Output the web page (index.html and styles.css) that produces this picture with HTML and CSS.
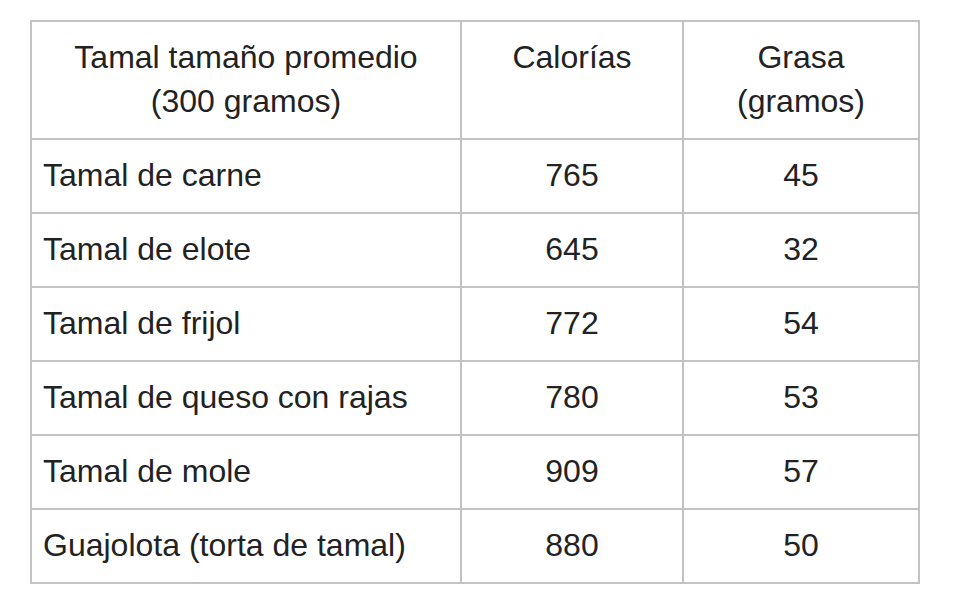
FILE: index.html
```html
<!DOCTYPE html>
<html lang="es">
<head>
<meta charset="utf-8">
<link rel="stylesheet" href="styles.css">
</head>
<body>
<table class="nutri">
  <colgroup>
    <col class="c1"><col class="c2"><col class="c3">
  </colgroup>
  <thead>
    <tr>
      <th>Tamal tamaño promedio<br>(300 gramos)</th>
      <th>Calorías</th>
      <th>Grasa<br>(gramos)</th>
    </tr>
  </thead>
  <tbody>
    <tr><td class="name">Tamal de carne</td><td>765</td><td>45</td></tr>
    <tr><td class="name">Tamal de elote</td><td>645</td><td>32</td></tr>
    <tr><td class="name">Tamal de frijol</td><td>772</td><td>54</td></tr>
    <tr><td class="name">Tamal de queso con rajas</td><td>780</td><td>53</td></tr>
    <tr><td class="name">Tamal de mole</td><td>909</td><td>57</td></tr>
    <tr><td class="name">Guajolota (torta de tamal)</td><td>880</td><td>50</td></tr>
  </tbody>
</table>
</body>
</html>
```

FILE: styles.css
```css
html, body {
  margin: 0;
  padding: 0;
  background: #ffffff;
}

body {
  padding: 20px 0 0 30px;
  font-family: "Liberation Sans", Arial, sans-serif;
  color: #222222;
}

.nutri {
  border-collapse: separate;
  border-spacing: 0;
  border-top: 2px solid #c3c3c3;
  border-left: 2px solid #c3c3c3;
  table-layout: fixed;
  width: 890px;
  font-size: 32px;
  line-height: 44px;
}

.c1 { width: 430px; }
.c2 { width: 222px; }
.c3 { width: 236px; }

.nutri th,
.nutri td {
  border-right: 2px solid #c3c3c3;
  border-bottom: 2px solid #c3c3c3;
  padding: 13px 11px 15px;
  text-align: center;
  vertical-align: top;
  font-weight: normal;
  white-space: nowrap;
}

.nutri td {
  vertical-align: middle;
}

.nutri td.name {
  text-align: left;
}
```
